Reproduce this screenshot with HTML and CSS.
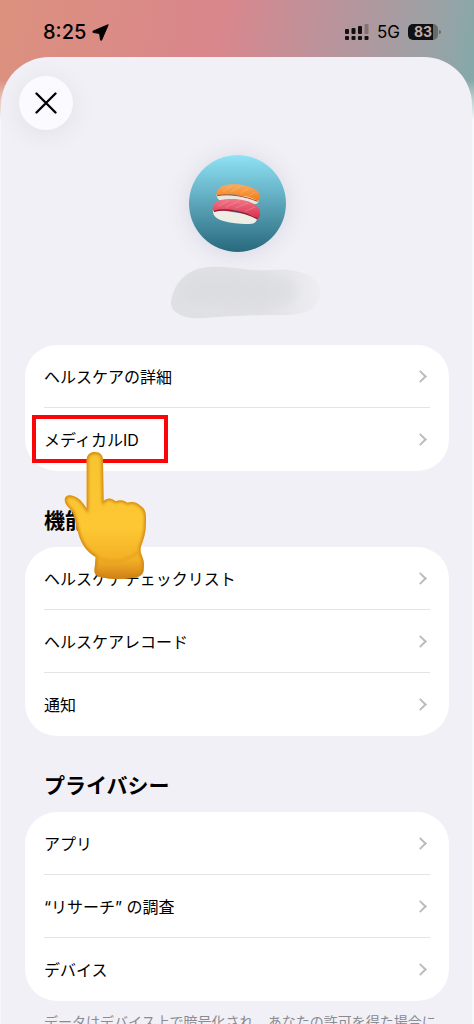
FILE: index.html
```
<!DOCTYPE html>
<html lang="ja">
  <head>
    <meta charset="UTF-8" />
    <meta name="viewport" content="width=device-width, initial-scale=1.0" />
    <title>ヘルスケア</title>
    <link rel="stylesheet" href="styles.css">
  </head>

  <body>
    <div class="app">
      <header class="status-bar">
        <div class="status-left">
          <span class="time">8:25</span>
          <svg class="location" viewBox="0 0 16 16" width="17" height="17">
            <path d="M15.200 0.800 L9.300 14.500 Q8.600 15.800 8 14.500 L7.200 8.800 L1.500 8 Q0.200 7.500 1.500 6.600 Z" fill="#000" stroke="#000" stroke-linejoin="round" />
          </svg>
        </div>
        <div class="status-right">
          <svg class="signal" viewBox="0 0 24 16" width="24" height="16">
            <g fill="#111">
              <rect x="0" y="5" width="4" height="5" rx="1" />
              <rect x="6.500" y="4" width="4" height="6" rx="1" />
              <rect x="13" y="2" width="4" height="8" rx="1" />
              <rect x="0" y="12" width="4" height="4" rx="1" />
              <rect x="6.500" y="12" width="4" height="4" rx="1" />
              <rect x="13" y="12" width="4" height="4" rx="1" />
              <rect x="19.500" y="12" width="4" height="4" rx="1" />
            </g>
            <rect x="19.500" y="0" width="4" height="10" rx="1" fill="#000" opacity="0.25" />
          </svg>
          <span class="network">5G</span>
          <div class="battery"><span class="battery-level">83</span></div>
        </div>
      </header>

      <main class="sheet">
        <button class="close" type="button" aria-label="閉じる">
          <svg viewBox="0 0 22 22" width="22" height="22">
            <path d="M1.500 1.500 L20.500 20.500 M20.500 1.500 L1.500 20.500" stroke="#000" stroke-width="2.300" stroke-linecap="round" />
          </svg>
        </button>

        <div class="profile">
          <div class="avatar">
            <!-- sushi -->
            <svg viewBox="0 0 192 180" width="64" height="60">
              <defs>
                <linearGradient id="salmon" x1="0" y1="0" x2="0" y2="1">
                  <stop offset="0" stop-color="#f9ac62" />
                  <stop offset="1" stop-color="#f47a12" />
                </linearGradient>
                <linearGradient id="tuna" x1="0" y1="0" x2="0" y2="1">
                  <stop offset="0" stop-color="#f0788a" />
                  <stop offset="1" stop-color="#d92c48" />
                </linearGradient>
              </defs>
              <path d="M35 60 C33 77 48 82 70 84 L150 90 C160 90 164 78 158 68 Z" fill="#e9e8e0" />
              <path d="M34 60 C36 42 52 33 80 31 C118 29 151 41 162 58 C166 67 164 80 157 81 C140 69 110 63 75 61 C58 60 44 63 37 66 Z" fill="url(#salmon)" />
              <path d="M37 65 C72 58 120 66 157 82" fill="none" stroke="#b9440d" stroke-width="3" />
              <path d="M54 53 L78 37 M78 54 L106 38 M106 58 L130 44 M132 65 L150 55" stroke="#ffc985" stroke-width="3" opacity="0.400" />
              <path d="M24 105 C22 126 34 135 58 142 C87 149 118 152 140 149 C154 147 158 137 156 126 Z" fill="#efeee6" />
              <path d="M22 105 C23 85 40 76 72 75 C112 73 150 84 162 104 C168 116 165 132 158 135 C137 119 107 110 73 107 C53 105 38 109 27 113 Z" fill="url(#tuna)" />
              <path d="M27 112 C60 102 120 112 157 135" fill="none" stroke="#9c1630" stroke-width="4" />
              <path d="M40 97 L72 79 M62 100 L104 80 M90 103 L130 86 M120 112 L150 99" stroke="#f7a6ae" stroke-width="3" opacity="0.400" />
            </svg>
          </div>
          <!-- name smudged out -->
          <svg class="smudge" viewBox="0 0 150 54" width="150" height="54">
            <defs>
              <linearGradient id="smear" x1="0" y1="0" x2="1" y2="0">
                <stop offset="0" stop-color="#dfe0e4" />
                <stop offset="0.600" stop-color="#e1e1e5" />
                <stop offset="1" stop-color="#ededf2" />
              </linearGradient>
              <filter id="soft" x="-10%" y="-20%" width="120%" height="140%">
                <feGaussianBlur stdDeviation="4" />
              </filter>
            </defs>
            <path d="M1 36 C4 17 16 3 38 1 C62 -1 78 6 100 4 C124 1 151 9 150 26 C150 42 138 49 112 49 C82 49 62 50 35 52 C16 54 0 47 1 36 Z" fill="url(#smear)" />
            <path d="M10 28 C14 40 36 38 60 40 C88 43 117 42 124 33 C130 27 126 17 118 12 C100 11 72 9 46 7 C26 7 12 14 10 28 Z" fill="#d9dbdf" opacity="0.600" filter="url(#soft)" />
          </svg>
        </div>

        <ul class="card">
          <li><a href="#details">ヘルスケアの詳細<i class="chevron"></i></a></li>
          <li class="target">
            <a href="#medical-id">メディカルID<i class="chevron"></i></a>
            <span class="highlight"></span>
            <svg class="hand" viewBox="10 30 255 390" width="85" height="130">
              <defs>
                <linearGradient id="skin" x1="0" y1="0" x2="0" y2="1">
                  <stop offset="0" stop-color="#f7c530" />
                  <stop offset="0.600" stop-color="#fdc733" />
                  <stop offset="0.850" stop-color="#f3b026" />
                  <stop offset="1" stop-color="#cf8016" />
                </linearGradient>
                <clipPath id="handClip">
                  <path id="handShape" d="M81 60 C81 44 92 36 106 36 C121 36 130 45 130 60 L132 183 C142 172 157 173 168 184 C181 178 194 180 203 188 C218 183 233 187 243 198 C257 205 260 221 259 244 C259 267 257 287 245 316 C239 331 245 343 250 356 C254 367 253 376 252 389 C251 406 238 411 218 414 C184 420 144 417 119 410 C105 406 103 396 105 383 L108 351 C80 335 65 311 57 284 C51 262 47 239 40 219 C34 208 16 196 15 181 C15 167 28 163 41 168 C58 173 69 187 81 205 Z" />
                </clipPath>
                <filter id="shade" x="-20%" y="-20%" width="140%" height="140%">
                  <feGaussianBlur stdDeviation="5" />
                </filter>
              </defs>
              <use href="#handShape" fill="url(#skin)" />
              <g clip-path="url(#handClip)">
                <use href="#handShape" fill="none" stroke="#d08312" stroke-width="10" filter="url(#shade)" />
                <path d="M108 350 C140 372 200 370 244 330" fill="none" stroke="#e9a11e" stroke-width="8" filter="url(#shade)" />
              </g>
            </svg>
          </li>
        </ul>

        <h2>機能</h2>
        <ul class="card">
          <li><a href="#checklist">ヘルスケアチェックリスト<i class="chevron"></i></a></li>
          <li><a href="#records">ヘルスケアレコード<i class="chevron"></i></a></li>
          <li><a href="#notifications">通知<i class="chevron"></i></a></li>
        </ul>

        <h2>プライバシー</h2>
        <ul class="card">
          <li><a href="#apps">アプリ<i class="chevron"></i></a></li>
          <li><a href="#research">“リサーチ” の調査<i class="chevron"></i></a></li>
          <li><a href="#devices">デバイス<i class="chevron"></i></a></li>
        </ul>
        <p class="note">データはデバイス上で暗号化され、あなたの許可を得た場合に</p>
      </main>
    </div>
  </body>
</html>
```

FILE: styles.css
```
* {
  box-sizing: border-box;
}

body {
  margin: 0;
  font-family: Inter, "Noto Sans CJK JP", sans-serif;
  color: #000;
}

.app {
  height: 100vh;
  overflow: hidden;
  display: flex;
  flex-direction: column;
  padding: 0 2px 0 1px;
  background: linear-gradient(to bottom, transparent 80px, #f7f8fb 120px),
    linear-gradient(100deg, #dc917e 0%, #d9868c 45%, #b9939b 68%, #98a3a6 90%, #7faaa9 100%) top / 100% 130px no-repeat;
}

/* status bar */
.status-bar {
  flex: none;
  height: 57px;
  padding: 7px 34px 0 42px;
  display: flex;
  align-items: center;
  justify-content: space-between;
}

.status-left,
.status-right {
  display: flex;
  align-items: center;
}

.status-left {
  gap: 6px;
}

.status-right {
  gap: 8px;
}

.time {
  font-size: 20px;
  font-weight: 500;
}

.network {
  font-size: 17px;
}

.battery {
  position: relative;
  width: 30px;
  height: 16px;
  border-radius: 5px;
  background: linear-gradient(to right, #111 83%, #666b6c 83%);
  text-align: center;
}

.battery::after {
  content: "";
  position: absolute;
  right: -3px;
  top: 6px;
  width: 2px;
  height: 4px;
  border-radius: 0 2px 2px 0;
  background: #666b6c;
}

.battery-level {
  display: block;
  font-size: 14px;
  font-weight: 700;
  line-height: 16px;
  color: #c0abb0;
}

/* sheet */
.sheet {
  flex: 1 0 auto;
  padding: 19px 23px 0 24px;
  border-radius: 48px 48px 0 0;
  background: #f1f0f6;
}

.close {
  display: flex;
  align-items: center;
  justify-content: center;
  width: 54px;
  height: 54px;
  margin-left: -6px;
  padding: 0;
  border: 0;
  border-radius: 50%;
  background: #fbfaff;
  box-shadow: 0 4px 28px rgba(0, 0, 0, 0.07);
}

.profile {
  display: flex;
  flex-direction: column;
  align-items: center;
  gap: 14px;
  margin: 25px 0;
}

.avatar {
  display: flex;
  align-items: center;
  justify-content: center;
  width: 97px;
  height: 97px;
  border-radius: 50%;
  background: linear-gradient(#90e2f6, #28697d);
  box-shadow: 0 2px 24px rgba(60, 60, 110, 0.13);
}

.smudge {
  margin-left: 16px;
}

h2 {
  margin: 0;
  padding: 35px 19px 11px;
  font-size: 21px;
  font-weight: 700;
  line-height: 30px;
}

.card {
  margin: 0;
  padding: 0 19px;
  list-style: none;
  border-radius: 32px;
  background: #fff;
}

.card li {
  border-bottom: 1px solid #e4e4e6;
}

.card li:last-child {
  border-bottom-color: transparent;
}

.card a {
  display: flex;
  align-items: center;
  justify-content: space-between;
  height: 62px;
  padding-right: 5px;
  font-size: 16px;
  color: #000;
  text-decoration: none;
}

.chevron {
  width: 9px;
  height: 9px;
  border-top: 2px solid #bcbcbf;
  border-right: 2px solid #bcbcbf;
  transform: rotate(45deg);
}

/* tap here marker */
.target {
  position: relative;
}

.highlight {
  position: absolute;
  top: 7px;
  left: -12px;
  width: 136px;
  height: 48px;
  border: 4px solid #fa0508;
}

.hand {
  position: absolute;
  top: 42px;
  left: 19px;
  z-index: 1;
}

.note {
  margin: 0;
  padding: 11px 0 0 19px;
  font-size: 14px;
  line-height: 20px;
  color: #8a8a8f;
}
```
